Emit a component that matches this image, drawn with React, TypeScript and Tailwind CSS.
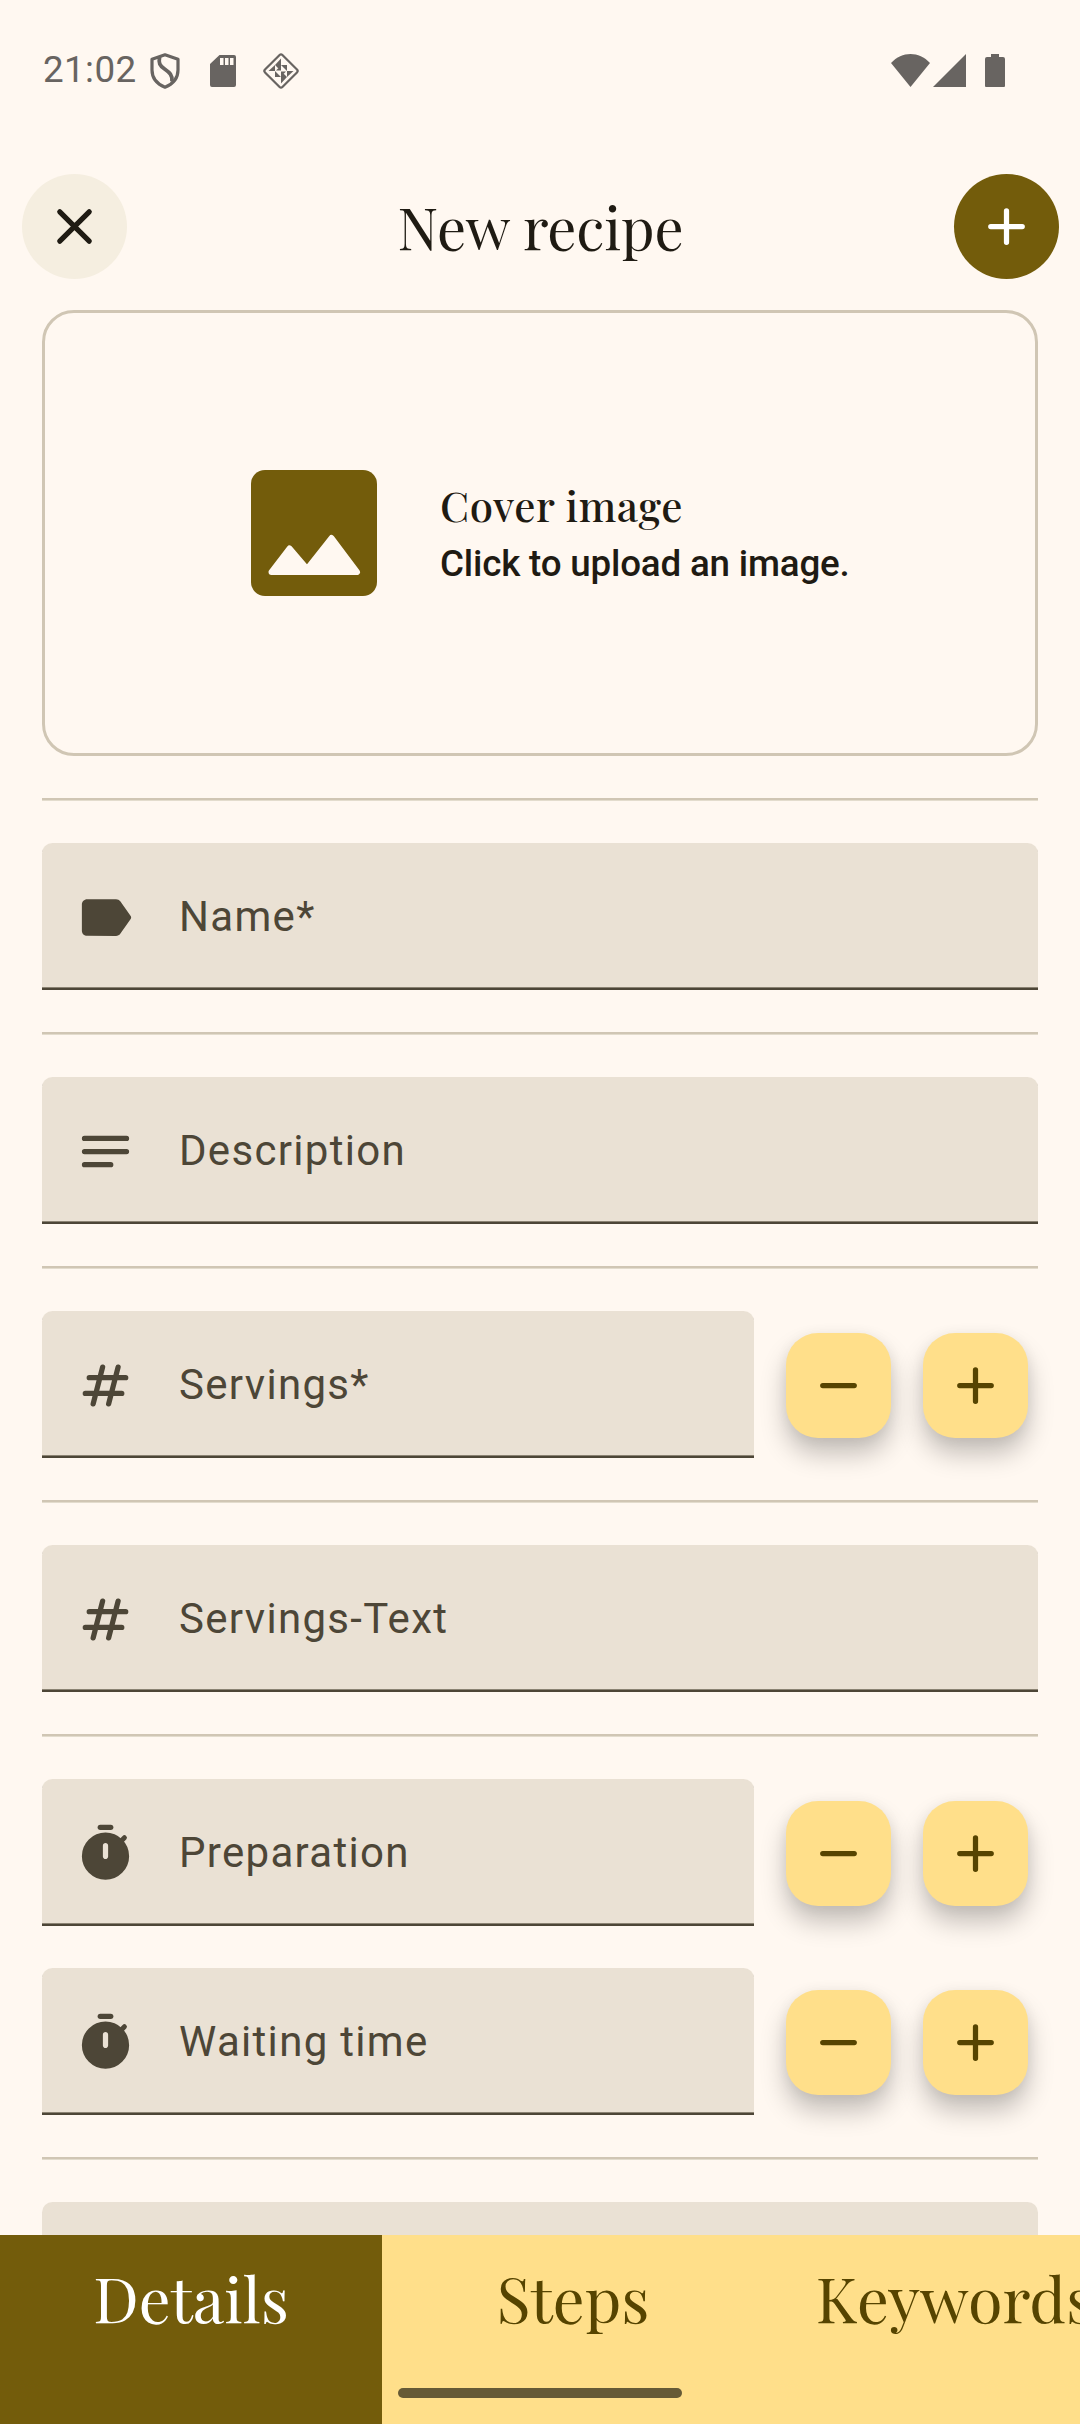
import type { ReactNode } from "react";

type FieldIcon = "label" | "notes" | "tag" | "timer";

function Glyph({ name }: { name: FieldIcon }) {
  return (
    <svg viewBox="0 0 24 24" className="ml-8 mt-1 size-[63px] shrink-0 text-[#4d4637]" fill="currentColor">
      {name === "label" && (
        <path d="M17.63 5.84C17.27 5.33 16.67 5 16 5L5 5.01C3.9 5.01 3 5.9 3 7v10c0 1.1.9 1.99 2 1.99L16 19c.67 0 1.27-.33 1.63-.84l3.96-5.58c.25-.35.25-.81 0-1.16l-3.96-5.58z" />
      )}
      {name === "notes" && (
        <path d="M4 7h16M4 12h16M4 17h10" stroke="currentColor" strokeWidth="2" strokeLinecap="round" />
      )}
      {name === "tag" && (
        <path
          d="M5.8 9h13.9M4.3 15h13.9M10.9 5 7.3 19M16.8 5l-3.6 14"
          fill="none"
          stroke="currentColor"
          strokeWidth="2"
          strokeLinecap="round"
        />
      )}
      {name === "timer" && (
        <>
          <path d="M10 2h4" stroke="currentColor" strokeWidth="2" strokeLinecap="round" />
          <path d="m17.8 7.4 1.4-1.4" stroke="currentColor" strokeWidth="1.9" strokeLinecap="round" />
          <path
            fillRule="evenodd"
            d="M12 4a9 9 0 1 0 0 18 9 9 0 0 0 0-18zm0 10.1c-.55 0-1-.45-1-1V9c0-.55.45-1 1-1s1 .45 1 1v4.1c0 .55-.45 1-1 1z"
          />
        </>
      )}
    </svg>
  );
}

function Plus({ minus = false }: { minus?: boolean }) {
  return (
    <svg viewBox="0 0 24 24" className="size-[63px]" fill="none" stroke="currentColor" strokeWidth="2" strokeLinecap="round">
      <path d={minus ? "M6 12h12" : "M6 12h12M12 6v12"} />
    </svg>
  );
}

function Field({ icon, label, narrow = false }: { icon: FieldIcon; label: string; narrow?: boolean }) {
  return (
    <div
      className={`flex h-[147px] shrink-0 items-center rounded-t-[10.5px] border-b-2 border-[#4d4637] bg-[#eae1d4] shadow-[inset_0_-1px_0_#8b8373] ${
        narrow ? "w-[712px]" : "w-full"
      }`}
    >
      <Glyph name={icon} />
      <span className="ml-[42px] mt-0.5 text-[42px] leading-none tracking-[1.31px] text-[#4d4637]">{label}</span>
    </div>
  );
}

function StepButton({ minus = false }: { minus?: boolean }) {
  return (
    <button className="flex size-[105px] items-center justify-center rounded-[32px] bg-[#ffdf8a] text-[#564400] shadow-[0_16px_26px_rgba(0,0,0,0.23),0_2px_14px_rgba(0,0,0,0.06)]">
      <Plus minus={minus} />
    </button>
  );
}

function StepperRow({ icon, label }: { icon: FieldIcon; label: string }) {
  return (
    <div className="flex shrink-0 items-center gap-8">
      <Field icon={icon} label={label} narrow />
      <div className="mt-[2px] flex gap-8">
        <StepButton minus />
        <StepButton />
      </div>
    </div>
  );
}

function Divider() {
  return <div className="h-[3px] shrink-0 border-b border-[#e3dccd] bg-[#d0c6b4]" />;
}

function StatusBar() {
  return (
    <div className="flex h-[141px] shrink-0 items-center pl-[43px] pr-[75px] text-[#686461]">
      <span className="w-[107px] text-[36.75px] leading-none tracking-[0.4px]">21:02</span>
      <svg viewBox="0 0 30 36" className="h-9 w-[30px]" fill="none" stroke="currentColor">
        <path d="M15 1.8 28 6.2V17c0 8-5 14-13 17.2C7 31 2 25 2 17V6.2z" strokeWidth="3.2" strokeLinejoin="round" />
        <path d="M9.6 4c-1.2 6 0 8.5 5 12s8 6 7.4 12.5" strokeWidth="3.8" />
      </svg>
      <svg viewBox="0 0 26 32" className="ml-[30px] h-8 w-[26px]" fill="currentColor">
        <path
          fillRule="evenodd"
          d="M9.5 0H24a2 2 0 0 1 2 2v28a2 2 0 0 1-2 2H2a2 2 0 0 1-2-2V9zM10 3v7h3.5V3zm5 0v7h3.5V3zm5 0v7h3.5V3z"
        />
      </svg>
      <svg viewBox="-19 -19 38 38" className="ml-[26px] size-[38px]" fill="currentColor">
        <rect x="-12.3" y="-12.3" width="24.6" height="24.6" rx="2" transform="rotate(45)" fill="none" stroke="currentColor" strokeWidth="2.2" />
        <path d="M0-12.5V-6H-6zM-12.5 0H-6V-6zM12.5 0H6V6zM0 12.5V6H6zM-6-6H0V0zM0-6H6V0zM-6 0V6H0zM0 0 6 6H0zM-5-.5-1-4.5V-.5zM5 .5 1 4.5V.5z" />
      </svg>
      <div className="ml-auto flex items-center">
        <svg viewBox="0 0 39 33" className="h-[33px] w-[39px]" fill="currentColor">
          <path d="M0 9C11-3 28-3 39 9L19.5 33z" />
        </svg>
        <svg viewBox="0 0 33 33" className="ml-[3px] size-[33px]" fill="currentColor">
          <path d="M33 0v33H0z" />
        </svg>
        <svg viewBox="0 0 20 33" className="ml-[19px] h-[33px] w-5" fill="currentColor">
          <path d="M6 0h8v3h4a2 2 0 0 1 2 2v27a1 1 0 0 1-1 1H1a1 1 0 0 1-1-1V5a2 2 0 0 1 2-2h4z" />
        </svg>
      </div>
    </div>
  );
}

function Tab({ active = false, children }: { active?: boolean; children: ReactNode }) {
  return (
    <div
      className={`flex w-[382px] shrink-0 justify-center whitespace-nowrap pt-[23px] font-['Playfair_Display','Liberation_Serif',serif] text-[63px] leading-[78px] ${
        active ? "bg-[#735c0b] text-white" : "text-[#564400]"
      }`}
    >
      {children}
    </div>
  );
}

export default function App() {
  return (
    <div className="relative flex h-[2424px] w-[1080px] flex-col overflow-hidden bg-[#fff8f1] font-[Roboto,sans-serif] text-[#1f1b13]">
      <StatusBar />
      <header className="mt-[33px] flex h-[105px] shrink-0 items-center justify-between pl-[22px] pr-[21px]">
        <button className="flex size-[105px] items-center justify-center rounded-full bg-[#f5eee0] text-[#1f1b13]">
          <svg viewBox="0 0 24 24" className="size-[63px]" fill="none" stroke="currentColor" strokeWidth="2" strokeLinecap="round">
            <path d="m6.4 6.4 11.2 11.2M17.6 6.4 6.4 17.6" />
          </svg>
        </button>
        <h1 className="font-['Playfair_Display','Liberation_Serif',serif] text-[57.75px] leading-none tracking-[-0.15px]">New recipe</h1>
        <button className="flex size-[105px] items-center justify-center rounded-full bg-[#735c0b] text-white">
          <Plus />
        </button>
      </header>

      <main className="mt-[31px] flex h-[1925px] shrink-0 flex-col gap-[42px] overflow-hidden px-[42px]">
        <div className="flex h-[446px] shrink-0 items-center rounded-[32px] border-[3px] border-[#d0c6b4] pl-[206px]">
          <svg viewBox="0 0 126 126" className="size-[126px] shrink-0">
            <rect width="126" height="126" rx="14" fill="#735c0b" />
            <path
              d="M20.5 102 38.5 78.5 56 99 80.5 68 106 102z"
              fill="#fff8f1"
              stroke="#fff8f1"
              strokeWidth="6"
              strokeLinejoin="round"
            />
          </svg>
          <div className="ml-[63px]">
            <div className="font-['Playfair_Display','Liberation_Serif',serif] text-[42px] font-medium leading-[62px] tracking-[0.6px]">
              Cover image
            </div>
            <div className="text-[36.75px] font-medium leading-[56px] tracking-[-0.19px]">Click to upload an image.</div>
          </div>
        </div>
        <Divider />
        <Field icon="label" label="Name*" />
        <Divider />
        <Field icon="notes" label="Description" />
        <Divider />
        <StepperRow icon="tag" label="Servings*" />
        <Divider />
        <Field icon="tag" label="Servings-Text" />
        <Divider />
        <StepperRow icon="timer" label="Preparation" />
        <StepperRow icon="timer" label="Waiting time" />
        <Divider />
        <div className="h-[147px] shrink-0 rounded-t-[10.5px] bg-[#eae1d4]" />
      </main>

      <nav className="flex h-[189px] shrink-0 overflow-hidden bg-[#ffdf8a]">
        <Tab active>Details</Tab>
        <Tab>Steps</Tab>
        <Tab>Keywords</Tab>
      </nav>
      <div className="absolute bottom-[26px] left-[398px] h-[10px] w-[284px] rounded-full bg-[#665a36]" />
    </div>
  );
}
